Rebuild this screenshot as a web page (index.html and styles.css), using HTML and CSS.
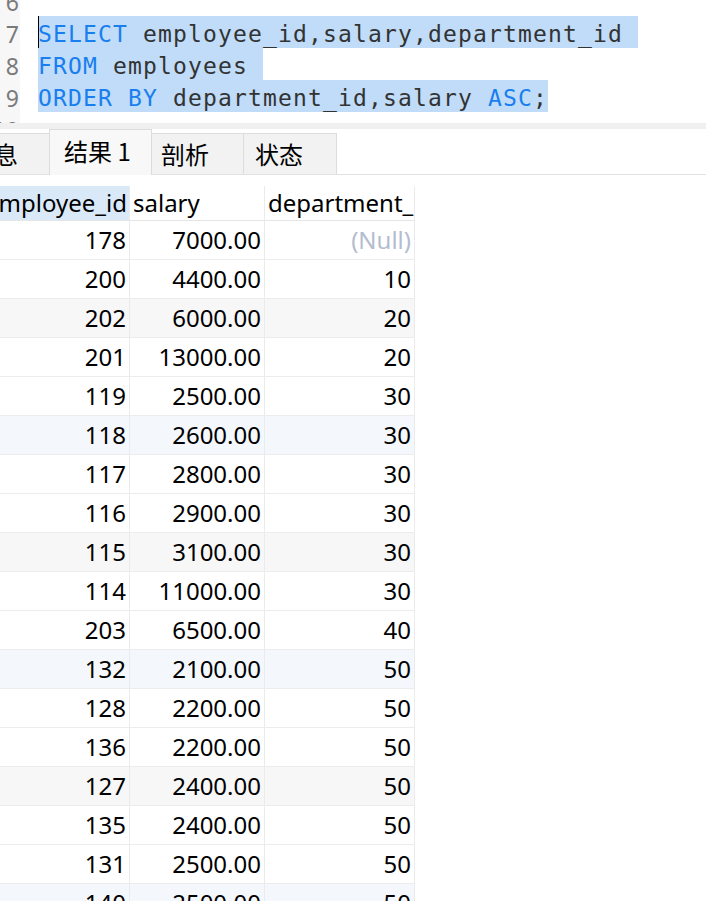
FILE: index.html
```html
<!DOCTYPE html>
<html lang="zh">
<head>
<meta charset="utf-8">
<title>Query</title>
<link rel="stylesheet" href="styles.css">
</head>
<body>
<div class="editor">
  <div class="gutter">
    <div class="ln">6</div>
    <div class="ln">7</div>
    <div class="ln">8</div>
    <div class="ln">9</div>
    <div class="ln">10</div>
  </div>
  <div class="code">
    <div class="line"></div>
    <div class="line"><span class="sel cursor"><span class="kw">SELECT</span> employee_id,salary,department_id </span></div>
    <div class="line"><span class="sel"><span class="kw">FROM</span> employees </span></div>
    <div class="line"><span class="sel"><span class="kw">ORDER BY</span> department_id,salary <span class="kw">ASC</span>;</span></div>
    <div class="line"></div>
  </div>
</div>
<div class="band"></div>
<div class="tabs">
  <div class="tab t-info">信息</div>
  <div class="tab active">结果 1</div>
  <div class="tab t-prof">剖析</div>
  <div class="tab t-stat">状态</div>
</div>
<div class="results">
  <div class="grid">
    <div class="hc hc-sel">employee_id</div><div class="hc">salary</div><div class="hc">department_id</div>
    <div class="row"><div class="c">178</div><div class="c">7000.00</div><div class="c null">(Null)</div></div>
    <div class="row"><div class="c">200</div><div class="c">4400.00</div><div class="c">10</div></div>
    <div class="row gray"><div class="c">202</div><div class="c">6000.00</div><div class="c">20</div></div>
    <div class="row"><div class="c">201</div><div class="c">13000.00</div><div class="c">20</div></div>
    <div class="row"><div class="c">119</div><div class="c">2500.00</div><div class="c">30</div></div>
    <div class="row blue"><div class="c">118</div><div class="c">2600.00</div><div class="c">30</div></div>
    <div class="row"><div class="c">117</div><div class="c">2800.00</div><div class="c">30</div></div>
    <div class="row"><div class="c">116</div><div class="c">2900.00</div><div class="c">30</div></div>
    <div class="row gray"><div class="c">115</div><div class="c">3100.00</div><div class="c">30</div></div>
    <div class="row"><div class="c">114</div><div class="c">11000.00</div><div class="c">30</div></div>
    <div class="row"><div class="c">203</div><div class="c">6500.00</div><div class="c">40</div></div>
    <div class="row blue"><div class="c">132</div><div class="c">2100.00</div><div class="c">50</div></div>
    <div class="row"><div class="c">128</div><div class="c">2200.00</div><div class="c">50</div></div>
    <div class="row"><div class="c">136</div><div class="c">2200.00</div><div class="c">50</div></div>
    <div class="row gray"><div class="c">127</div><div class="c">2400.00</div><div class="c">50</div></div>
    <div class="row"><div class="c">135</div><div class="c">2400.00</div><div class="c">50</div></div>
    <div class="row"><div class="c">131</div><div class="c">2500.00</div><div class="c">50</div></div>
    <div class="row blue"><div class="c">140</div><div class="c">2500.00</div><div class="c">50</div></div>
  </div>
</div>
</body>
</html>
```
FILE: styles.css
```css
html, body {
  margin: 0;
  padding: 0;
  background: #ffffff;
  overflow: hidden;
  width: 706px;
  height: 901px;
}

.editor {
  display: flex;
  height: 123px;
  overflow: hidden;
  background: #ffffff;
}

.gutter {
  width: 20px;
  flex: none;
  background: #f7f7f7;
  margin-top: -16px;
  overflow: hidden;
  font-family: "Noto Sans", "Open Sans", sans-serif;
  font-size: 23px;
  color: #7a7a7a;
}

.ln {
  box-sizing: border-box;
  height: 32px;
  line-height: 32px;
  padding-top: 2px;
  display: flex;
  justify-content: flex-end;
  padding-right: 1px;
  white-space: nowrap;
}

.code {
  margin-top: -16px;
  padding-left: 18px;
  font-family: "DejaVu Sans Mono", "Liberation Mono", monospace;
  font-size: 23px;
  letter-spacing: 1.15px;
  color: #333333;
}

.line {
  height: 32px;
  line-height: 32px;
  white-space: pre;
}

.sel {
  display: inline-block;
  box-sizing: border-box;
  height: 32px;
  line-height: 30px;
  padding-top: 3px;
  vertical-align: top;
  background: #c0dcf8;
}

.cursor {
  box-shadow: inset 1px 0 0 #000000;
}

.kw {
  color: #1a7fee;
}

.band {
  height: 6px;
  background: #f0f0f0;
}

.tabs {
  display: flex;
  align-items: flex-end;
  height: 45px;
  margin-left: -42px;
  border-bottom: 1px solid #e2e2e2;
  font-family: "Noto Sans CJK SC", "Noto Sans", sans-serif;
  font-size: 24px;
  color: #000000;
}

.tab {
  box-sizing: border-box;
  height: 41px;
  line-height: 40px;
  background: #f2f2f2;
  border: 1px solid #dcdcdc;
  border-bottom: none;
  margin-right: -1px;
  white-space: nowrap;
}

.t-info {
  width: 92px;
  padding-left: 11px;
}

.tab.active {
  width: 103px;
  height: 46px;
  line-height: 42px;
  padding-left: 14px;
  background: #f8f8f8;
  margin-bottom: -1px;
  position: relative;
}

.t-prof {
  width: 93px;
  padding-left: 9px;
}

.t-stat {
  width: 94px;
  padding-left: 11px;
}

.results {
  margin-top: 11px;
  overflow: hidden;
}

.grid {
  display: grid;
  grid-template-columns: 148px 135px 150px;
  width: 433px;
  margin-left: -18px;
  font-family: "Noto Sans", "Open Sans", sans-serif;
  font-size: 24px;
  color: #000000;
}

.row {
  display: contents;
}

.hc {
  box-sizing: border-box;
  height: 35px;
  line-height: 34px;
  padding-left: 3px;
  border-right: 1px solid #ebebeb;
  border-bottom: 1px solid #e6e6e6;
  white-space: nowrap;
  overflow: hidden;
}

.hc-sel {
  background: #d9e9f8;
}

.c {
  box-sizing: border-box;
  height: 39px;
  line-height: 38px;
  padding-right: 3px;
  text-align: right;
  border-right: 1px solid #ebebeb;
  border-bottom: 1px solid #ececec;
  white-space: nowrap;
}

.gray .c {
  background: #f7f7f7;
}

.blue .c {
  background: #f4f8fd;
}

.null {
  color: #b4bccf;
}
```
